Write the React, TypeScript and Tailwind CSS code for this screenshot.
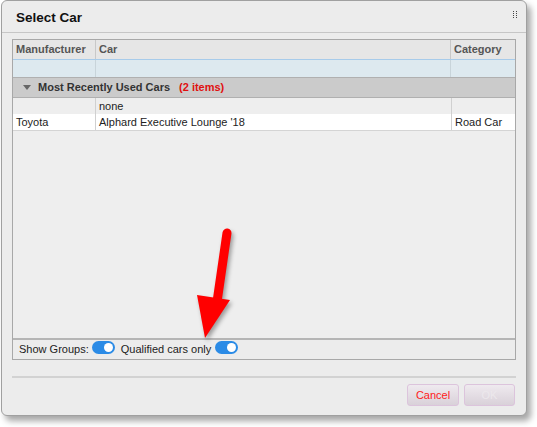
import React from 'react'

function Toggle() {
  return (
    <span className="relative inline-flex h-[13px] w-[23px] items-center rounded-full bg-[#2b8be6]">
      <span className="absolute right-[2px] h-[9px] w-[9px] rounded-full bg-white" />
    </span>
  )
}

function Row({ m, car, cat, bg }: { m: string; car: string; cat: string; bg: string }) {
  return (
    <div className={`flex h-[16px] ${bg} text-[11px] leading-[16px] text-[#222]`}>
      <div className="w-[83px] border-r border-[#d0d0d0] pl-[3px]">{m}</div>
      <div className="flex-1 border-r border-[#d0d0d0] pl-[3px]">{car}</div>
      <div className="w-[63px] pl-[3px]">{cat}</div>
    </div>
  )
}

export default function App() {
  return (
    <div
      className="relative h-[427px] w-[537px] bg-white"
      style={{ fontFamily: '"Liberation Sans", Arial, sans-serif' }}
    >
      <div className="absolute left-[1px] top-0 flex h-[416px] w-[526px] flex-col rounded-md border border-[#a0a0a0] bg-[#ececec] shadow-[4px_5px_6px_rgba(0,0,0,0.35)]">
        {/* title bar */}
        <div className="flex h-[32px] items-center justify-between border-b border-[#c6c6c6] pl-[14px] pr-[9px]">
          <span className="pt-[4px] text-[13.5px] font-bold text-[#111]">Select Car</span>
          <span className="-mt-[4px] grid grid-cols-2 gap-x-[2px] gap-y-[1px]">
            {[0, 1, 2, 3, 4, 5, 6, 7].map((i) => (
              <span key={i} className="h-[1px] w-[1px] bg-[#444]" />
            ))}
          </span>
        </div>

        {/* table */}
        <div className="mx-[10px] mt-[6px] flex h-[321px] flex-col border border-[#a8a8a8] bg-[#ededed]">
          <div className="flex h-[19px] bg-[#e6e6e6] text-[11px] font-bold leading-[19px] text-[#555]">
            <div className="w-[83px] border-r border-[#c8c8c8] pl-[3px]">Manufacturer</div>
            <div className="flex-1 border-r border-[#c8c8c8] pl-[3px]">Car</div>
            <div className="w-[64px] pl-[3px]">Category</div>
          </div>
          <div className="flex h-[18px] border-t border-[#a7cbea] bg-[#dde9ef]">
            <div className="w-[83px] border-r border-[#c8d4da]" />
            <div className="flex-1 border-r border-[#c8d4da]" />
            <div className="w-[64px]" />
          </div>
          <div className="flex h-[21px] items-center border-y border-[#b0b0b0] bg-[#cbcbcb] pl-[10px] text-[11px] font-bold text-[#333]">
            <span className="mr-[7px] h-0 w-0 border-x-[4px] border-t-[5px] border-x-transparent border-t-[#666]" />
            <span>Most Recently Used Cars</span>
            <span className="ml-[9px] text-[#e01010]">(2 items)</span>
          </div>
          <Row m="" car="none" cat="" bg="bg-[#eeeeee]" />
          <Row m="Toyota" car="Alphard Executive Lounge '18" cat="Road Car" bg="bg-white" />
          <div className="flex-1 border-t border-[#d4d4d4] bg-[#eeeeee]" />
          <div className="flex h-[21px] items-center border-t-2 border-[#b5b5b5] bg-[#ececec] pl-[6px] text-[11px] text-[#222]">
            <span>Show Groups:</span>
            <span className="ml-[3px]"><Toggle /></span>
            <span className="ml-[6px]">Qualified cars only</span>
            <span className="ml-[4px]"><Toggle /></span>
          </div>
        </div>

        <div className="mx-[10px] mt-[16px] h-[2px] bg-[#d2d2d2]" />

        <div className="mr-[11px] mt-[6px] flex justify-end gap-[5px]">
          <button className="h-[22px] w-[52px] rounded-[3px] border border-[#dcc4dc] bg-gradient-to-b from-[#efeaef] to-[#d9d1d9] text-[11px] text-[#ff1a1a]">
            Cancel
          </button>
          <button className="h-[22px] w-[51px] rounded-[3px] border border-[#dcc4dc] bg-gradient-to-b from-[#efeaef] to-[#d9d1d9] text-[11px] text-[#ece8ec]">
            OK
          </button>
        </div>
      </div>

      {/* red arrow */}
      <svg
        className="absolute left-[190px] top-[222px]"
        width="50"
        height="125"
        viewBox="0 0 50 125"
        style={{ filter: 'drop-shadow(2px 3px 2px rgba(0,0,0,0.35))' }}
      >
        <line x1="37" y1="11" x2="27" y2="80" stroke="#ff0000" strokeWidth="9" strokeLinecap="round" />
        <polygon points="7,73 40,78 15,116" fill="#ff0000" />
      </svg>
    </div>
  )
}
